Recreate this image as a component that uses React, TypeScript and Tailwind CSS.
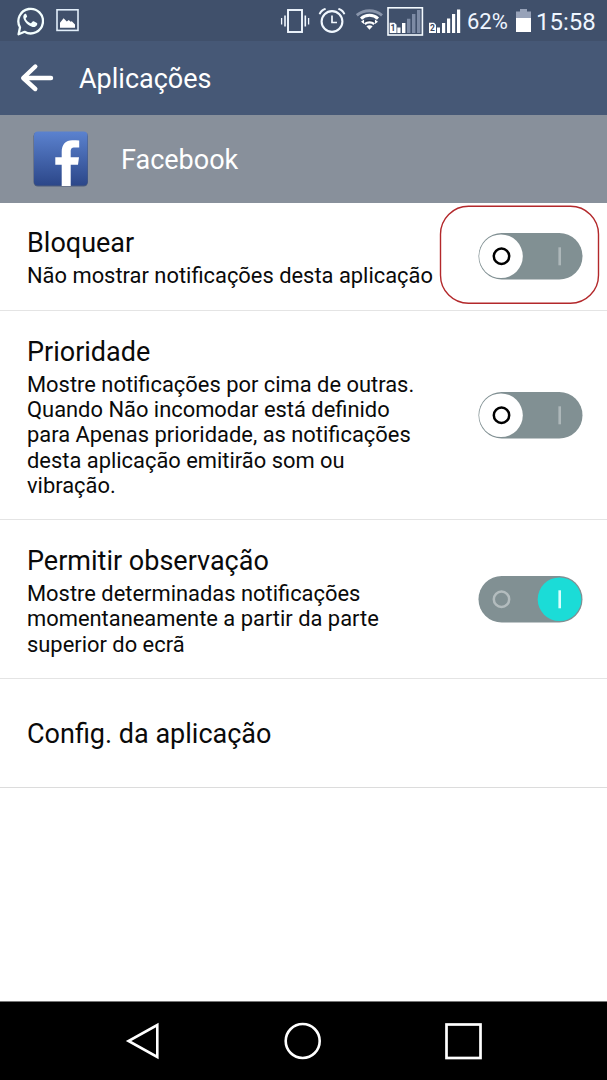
import clsx from 'clsx';

function WhatsappIcon() {
  return (
    <svg className="ml-4 w-7 h-8" viewBox="16 4 28 32" fill="none">
      <path
        d="M18.6 33.2 20 26.2A12.3 12.3 0 1 1 24.6 30.8Z"
        stroke="#f4ffff"
        strokeWidth="2.3"
        strokeLinejoin="round"
      />
      <path
        d="M25.2 12.8c-1.3.6-2 1.9-1.9 3.5.3 3.8 5 8.8 9.300 9.600 2.200.3 4.200-.7 4.600-2.500.2-1 0-1.300-.7-1.700l-2.800-1.400c-.6-.3-.9-.1-1.400.4l-1 1.300c-.3.4-.7.4-1.200.1-1.800-.8-3.200-2.100-4.200-3.800-.3-.5-.2-.7.1-1.200l.9-1c.3-.4.3-.7.1-1.200l-.9-1.900c-.2-.4-.5-.4-.9-.2Z"
        fill="#f4ffff"
      />
    </svg>
  );
}

function ImageIcon() {
  return (
    <svg className="ml-3 w-[23px] h-[23px]" viewBox="56 9 23 23" fill="none">
      <rect x="57" y="9.8" width="21" height="20.6" stroke="#e2eefa" strokeWidth="1.6" />
      <path d="M60 27.7v-5l3.6-4.400 3.200 3.200 2-1.400 1.800 1.600 1.200-.4 3.200 3.200v3.200Z" fill="#fff" />
    </svg>
  );
}

function VibrateIcon() {
  return (
    <svg className="w-[30px] h-6" viewBox="280 8 30 24" fill="none" stroke="#f1f8ff">
      <rect x="288" y="9" width="14" height="22" strokeWidth="1.9" />
      <path d="M285 14.500v11M305.300 14.500v11" strokeWidth="1.6" />
      <path d="M281.600 17v6.500M308.600 17v6.500" strokeWidth="1.3" />
    </svg>
  );
}

function AlarmIcon() {
  return (
    <svg className="ml-2 w-7 h-[26px]" viewBox="318 8 28 26" fill="none" stroke="#f1f8ff">
      <circle cx="332" cy="21.5" r="10.4" strokeWidth="2.1" />
      <path d="M332 15.500v7h5" strokeWidth="1.7" />
      <path d="M319.600 14.200c.8-2.400 3-4.400 6-5.400M344.400 14.200c-.8-2.400-3-4.400-6-5.400" strokeWidth="2" />
    </svg>
  );
}

function WifiIcon() {
  return (
    <svg className="ml-2.5 w-7 h-[23px]" viewBox="356 9 28 23" fill="none">
      <path d="M356.800 15.300c7.300-6 17.800-6 25.200 0" stroke="#8995ab" strokeWidth="3" />
      <path d="M361 18.600c4.700-4.400 12.300-4.400 17 0" stroke="#fff" strokeWidth="3" />
      <path d="M365.600 21.200h8" stroke="#253044" strokeWidth="2" />
      <path d="M364.800 24.200c2.600-2.400 6.800-2.400 9.400 0" stroke="#fff" strokeWidth="2.4" />
      <path d="m366.400 26.300 3.100 3.500 3.100-3.500c-1.800-1.500-4.400-1.500-6.200 0Z" fill="#fff" />
      <path d="m361 21.800 3-2.200v4.400ZM378 21.800l-3-2.200v4.400Z" fill="#fff" />
    </svg>
  );
}

function SimOneIcon() {
  return (
    <svg className="ml-[3px] w-[37px] h-[30px]" viewBox="387 5 37 30" fill="none">
      <rect x="388" y="6.8" width="34.4" height="27.2" stroke="#f4faff" strokeWidth="1.6" />
      <path d="M389.700 21.700h4.800l2 2V32h-6.800Z" fill="#fff" />
      <text x="390.6" y="30.2" fontSize="8.5" fontWeight="700" fill="#34425b">
        1
      </text>
      <path d="M397.300 26.500h3.200V32h-3.200ZM402 22h3.400v10H402Z" fill="#fff" />
      <path d="M407 17.800h3.400V32H407ZM412 13h3.400v19H412ZM417 9h3.400v23H417Z" fill="#7d8ba5" />
    </svg>
  );
}

function SimTwoIcon() {
  return (
    <svg className="ml-1 w-[33px] h-[26px]" viewBox="428 7 33 26" fill="none">
      <path d="M429 21.700h5l2 2V32h-7Z" fill="#fff" />
      <text x="430" y="30.2" fontSize="8.5" fontWeight="700" fill="#34425b">
        2
      </text>
      <path
        d="M437 26.500h3V32h-3ZM442 22h3.200v10H442ZM447 17.600h3.200V32H447ZM452 13h3.200v19H452ZM457 8.400h3.200V32H457Z"
        fill="#fff"
      />
    </svg>
  );
}

function BatteryIcon() {
  return (
    <svg className="ml-2 w-4 h-6" viewBox="516 9 16 24">
      <path d="M520 9h7v2.500h4V18h-15v-6.500h4Z" fill="#97a2b8" />
      <path d="M516 18h15v14h-15Z" fill="#fff" />
    </svg>
  );
}

function StatusBar() {
  return (
    <div className="h-[41px] bg-[#40506b] flex items-center text-[#eff6ff]">
      <WhatsappIcon />
      <ImageIcon />
      <div className="ml-auto pr-3 flex items-center">
        <VibrateIcon />
        <AlarmIcon />
        <WifiIcon />
        <SimOneIcon />
        <SimTwoIcon />
        <span className="ml-1.5 w-[41px] pt-0.5 text-[22px] leading-none whitespace-nowrap">62%</span>
        <BatteryIcon />
        <span className="ml-1 w-[59px] pt-0.5 text-2xl leading-none whitespace-nowrap">15:58</span>
      </div>
    </div>
  );
}

function Header() {
  return (
    <div className="h-[74px] bg-[#465876] flex items-center text-white">
      <svg className="ml-5 w-[34px] h-[30px]" viewBox="20 63 34 30" fill="none">
        <path
          d="M51 78H24M35.300 66.500 23.200 78l12.100 11"
          stroke="#fff"
          strokeWidth="4.4"
          strokeLinecap="round"
          strokeLinejoin="round"
        />
      </svg>
      <h1 className="ml-[25px] pt-[3px] text-[27px] leading-none">Aplicações</h1>
    </div>
  );
}

function AppBanner() {
  return (
    <div className="h-22 bg-[#88909b] flex items-center text-white">
      <svg className="ml-[33px] w-[56px] h-[56px]" viewBox="33 131 56 56">
        <defs>
          <linearGradient id="fb" x1="0" y1="0" x2="0" y2="1">
            <stop offset="0" stopColor="#5b82cf" />
            <stop offset="1" stopColor="#2c4789" />
          </linearGradient>
        </defs>
        <rect x="33.5" y="132" width="54.5" height="54.5" rx="4.5" fill="#4c5b7a" />
        <rect x="34" y="131.5" width="53.5" height="54" rx="4" fill="url(#fb)" />
        <path
          d="M61.700 186v-21.300h-6.400v-7.400h6.400v-5.300c0-7.800 4-11.800 10.500-11.800 2.500 0 4.800.1 7 .3v7h-4.400c-3.400 0-4.100 1.500-4.100 4.200v5.600h8.300l-1 7.400h-7.300V186Z"
          fill="#fff"
        />
      </svg>
      <h2 className="ml-8 pt-[3px] text-[27px] leading-none">Facebook</h2>
    </div>
  );
}

function Toggle({ on }: { on?: boolean }) {
  return (
    <svg className="w-[105px] h-[47px] shrink-0" viewBox="0 0 105 47" fill="none">
      <rect x="0.5" width="104" height="46.5" rx="23.25" fill="#819093" />
      <circle cx={on ? 81.5 : 23} cy="23.25" r="21.8" fill={on ? '#1bdcd7' : '#fff'} />
      <circle cx="23.5" cy="23.25" r="7.7" stroke={on ? '#b3bcbe' : '#000'} strokeWidth="2.5" />
      <path d="M81.700 14.300v18" stroke={on ? '#d8fffd' : '#adb7b9'} strokeWidth="2.6" />
    </svg>
  );
}

type RowProps = {
  title: string;
  lines: string[];
  on?: boolean;
  highlighted?: boolean;
  className: string;
};

function SettingRow({ title, lines, on, highlighted, className }: RowProps) {
  return (
    <div
      className={clsx('relative pl-[27px] pr-6 border-b border-[#e4e4e4] flex items-center justify-between', className)}
    >
      <div className={clsx('whitespace-nowrap', highlighted ? 'pt-[3px]' : 'pt-[5px]')}>
        <h3 className="text-[27px] leading-[31px]">{title}</h3>
        <p className="mt-1 text-[21.9px] leading-[25.3px]">
          {lines.map((line) => (
            <span key={line} className="block">
              {line}
            </span>
          ))}
        </p>
      </div>
      <Toggle on={on} />
      {highlighted && (
        <svg className="absolute right-[7px] top-0.5 w-[161px] h-[100px]" viewBox="439 205 161 100" fill="none">
          <rect x="440.5" y="206.2" width="158" height="97" rx="28" stroke="#b3282b" strokeWidth="1.4" />
        </svg>
      )}
    </div>
  );
}

function NavBar() {
  return (
    <div className="h-[79px] bg-black border-t border-[#777] flex items-center">
      <svg className="ml-[125px] w-9 h-10" viewBox="125 1021 36 40" fill="none">
        <path d="M157.300 1025v32L128.500 1041Z" stroke="#fff" strokeWidth="2.6" />
      </svg>
      <svg className="ml-[122px] w-10 h-10" viewBox="283 1021 40 40" fill="none">
        <circle cx="302.7" cy="1041" r="17" stroke="#fff" strokeWidth="2.6" />
      </svg>
      <svg className="ml-[120px] w-10 h-10" viewBox="443 1021 40 40" fill="none">
        <rect x="446.5" y="1024.5" width="34" height="33.5" stroke="#fff" strokeWidth="2.7" />
      </svg>
    </div>
  );
}

export default function App() {
  return (
    <div className="w-[607px] h-[1080px] flex flex-col bg-white text-[#0a0a0a] font-[Roboto,sans-serif] overflow-hidden">
      <StatusBar />
      <Header />
      <AppBanner />
      <SettingRow
        className="h-[108px]"
        title="Bloquear"
        lines={['Não mostrar notificações desta aplicação']}
        highlighted
      />
      <SettingRow
        className="h-[209px]"
        title="Prioridade"
        lines={[
          'Mostre notificações por cima de outras.',
          'Quando Não incomodar está definido',
          'para Apenas prioridade, as notificações',
          'desta aplicação emitirão som ou',
          'vibração.',
        ]}
      />
      <SettingRow
        className="h-[159px]"
        title="Permitir observação"
        lines={['Mostre determinadas notificações', 'momentaneamente a partir da parte', 'superior do ecrã']}
        on
      />
      <div className="h-[109px] pl-[27px] pt-[3px] border-b border-[#dcdcdc] flex items-center">
        <h3 className="text-[27px] leading-[31px]">Config. da aplicação</h3>
      </div>
      <div className="flex-1" />
      <NavBar />
    </div>
  );
}
